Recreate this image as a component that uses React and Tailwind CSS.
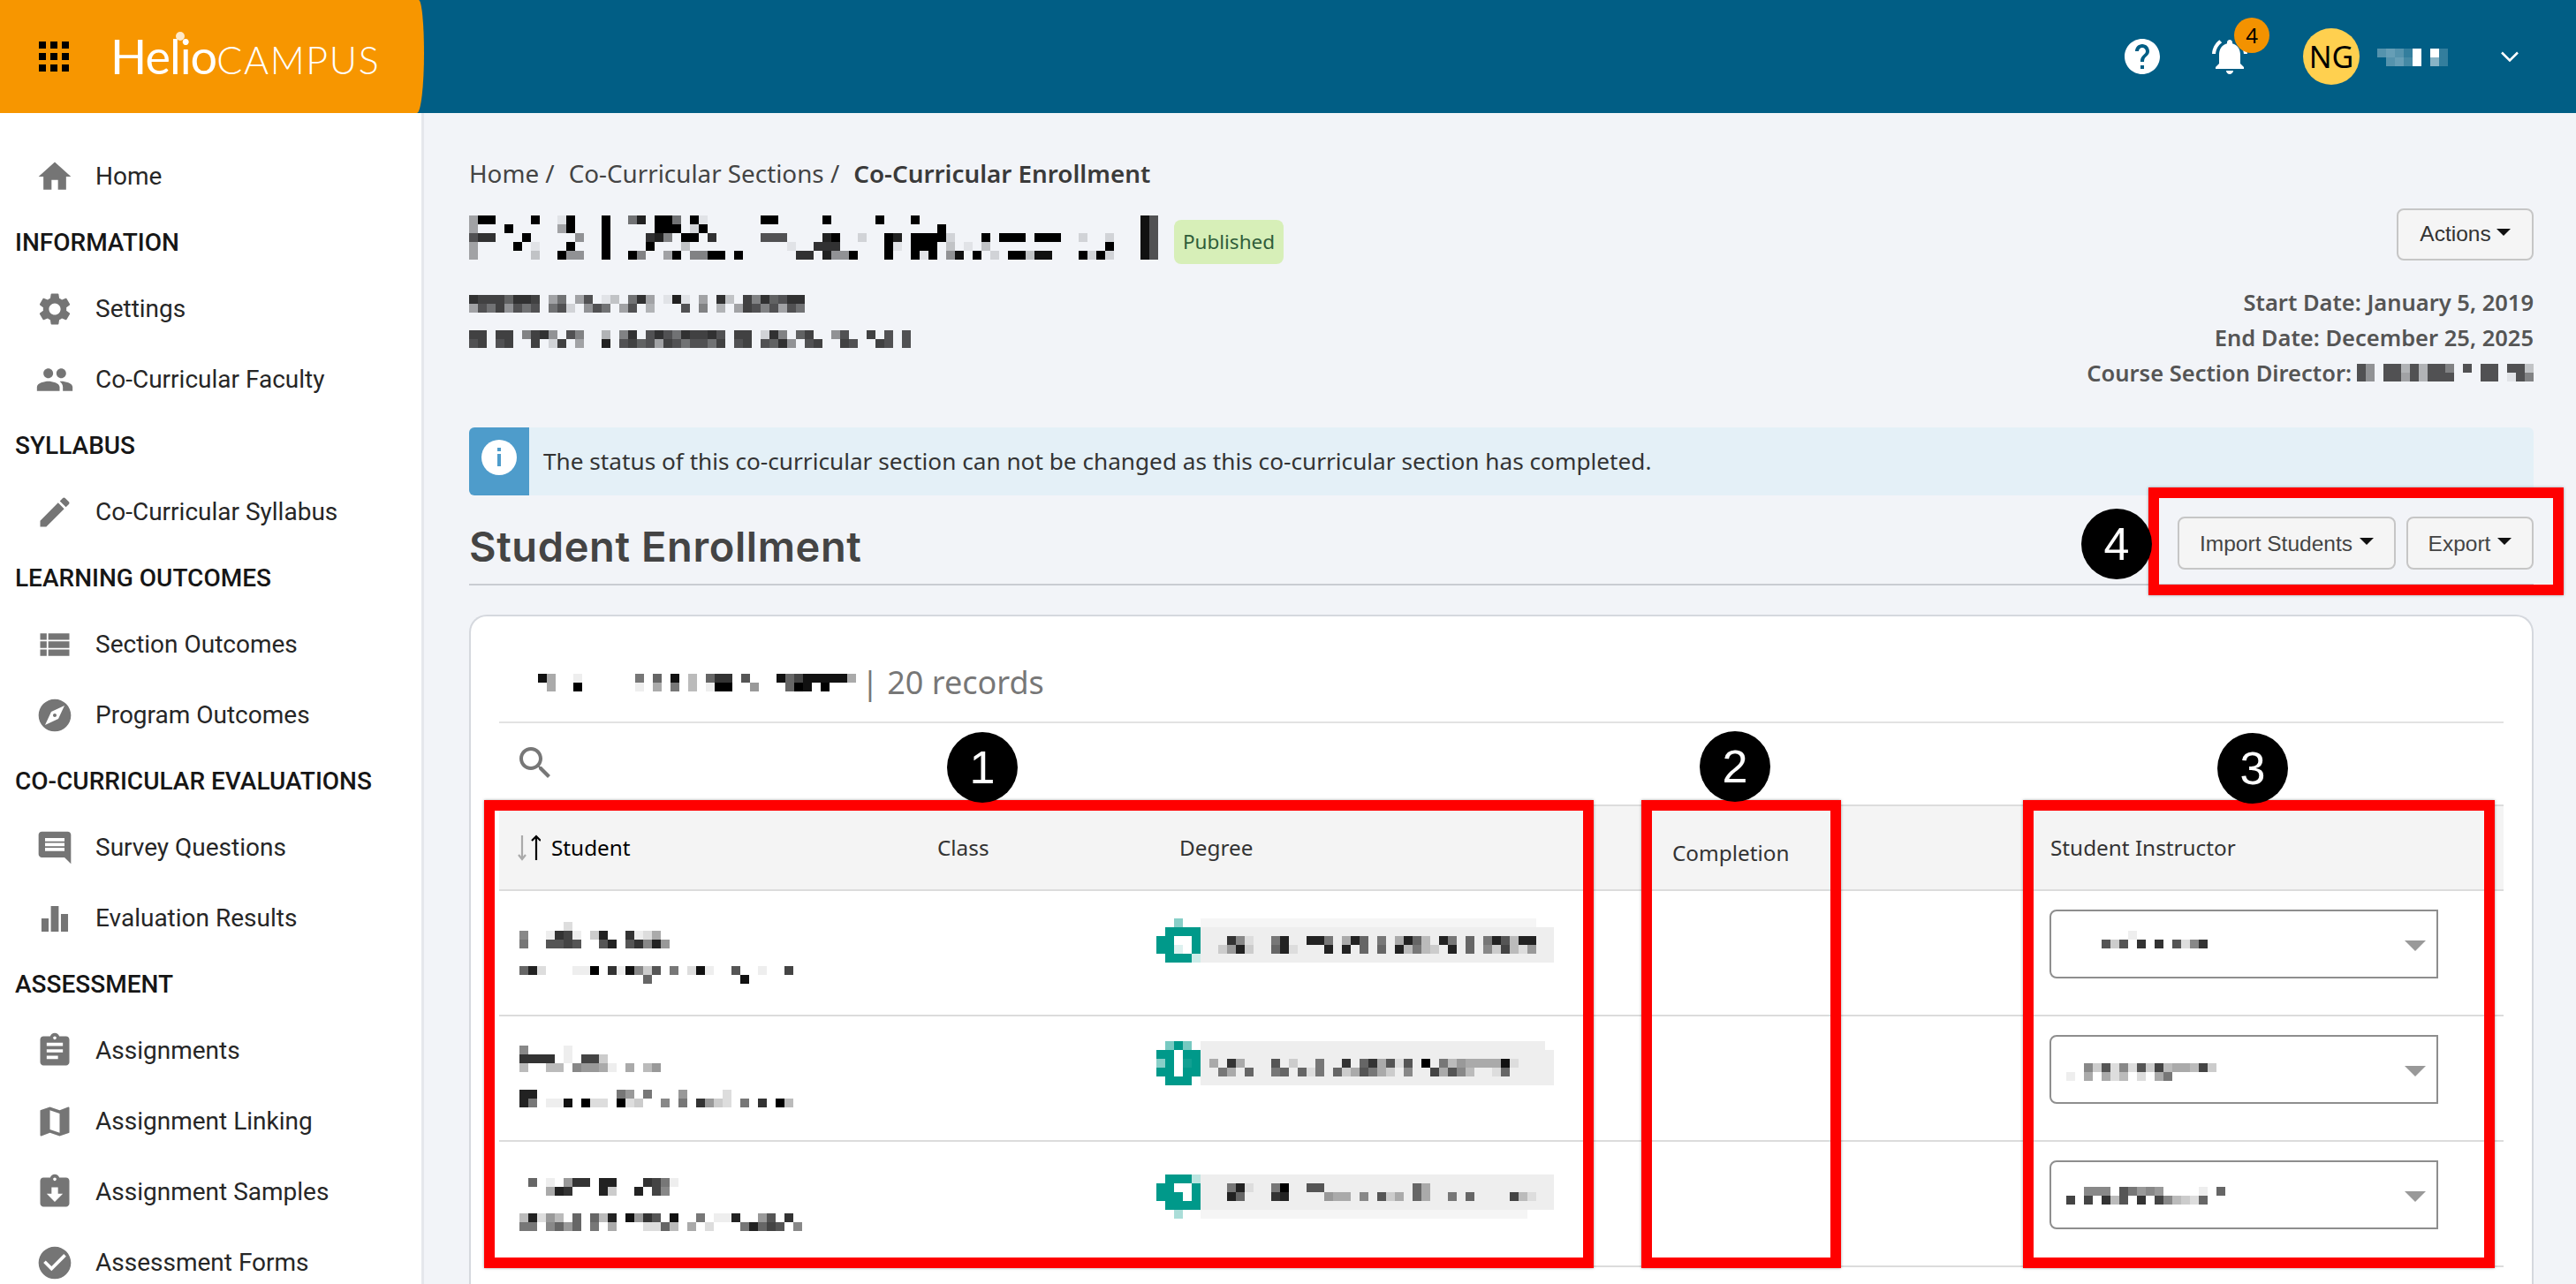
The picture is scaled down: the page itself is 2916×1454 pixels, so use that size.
import React from 'react';

const ICONS = {
  home: 'M10 20v-6h4v6h5v-8h3L12 3 2 12h3v8z',
  settings: 'M19.14,12.94c0.04-0.3,0.06-0.61,0.06-0.94c0-0.32-0.02-0.64-0.07-0.94l2.03-1.58c0.18-0.14,0.23-0.41,0.12-0.61 l-1.92-3.32c-0.12-0.22-0.37-0.29-0.59-0.22l-2.39,0.96c-0.5-0.38-1.03-0.7-1.62-0.94L14.4,2.81c-0.04-0.24-0.24-0.41-0.48-0.41 h-3.84c-0.24,0-0.43,0.17-0.47,0.41L9.25,5.35C8.66,5.59,8.12,5.92,7.63,6.29L5.24,5.33c-0.22-0.08-0.47,0-0.59,0.22L2.74,8.87 C2.62,9.08,2.66,9.34,2.86,9.48l2.03,1.58C4.84,11.36,4.8,11.69,4.8,12s0.02,0.64,0.07,0.94l-2.03,1.58 c-0.18,0.14-0.23,0.41-0.12,0.61l1.92,3.32c0.12,0.22,0.37,0.29,0.59,0.22l2.39-0.96c0.5,0.38,1.03,0.7,1.62,0.94l0.36,2.54 c0.05,0.24,0.24,0.41,0.48,0.41h3.84c0.24,0,0.44-0.17,0.47-0.41l0.36-2.54c0.59-0.24,1.13-0.56,1.62-0.94l2.39,0.96 c0.22,0.08,0.47,0,0.59-0.22l1.92-3.32c0.12-0.22,0.07-0.47-0.12-0.61L19.14,12.94z M12,15.6c-1.98,0-3.6-1.62-3.6-3.6 s1.62-3.6,3.6-3.6s3.6,1.62,3.6,3.6S13.98,15.6,12,15.6z',
  people: 'M16 11c1.66 0 2.99-1.34 2.99-3S17.66 5 16 5c-1.66 0-3 1.34-3 3s1.34 3 3 3zm-8 0c1.66 0 2.99-1.34 2.99-3S9.66 5 8 5C6.34 5 5 6.34 5 8s1.34 3 3 3zm0 2c-2.33 0-7 1.17-7 3.5V19h14v-2.5c0-2.33-4.67-3.5-7-3.5zm8 0c-.29 0-.62.02-.97.05 1.16.84 1.97 1.97 1.97 3.45V19h6v-2.5c0-2.33-4.67-3.5-7-3.5z',
  edit: 'M3 17.25V21h3.75L17.81 9.94l-3.75-3.75L3 17.25zM20.71 7.04c.39-.39.39-1.02 0-1.41l-2.34-2.34c-.39-.39-1.02-.39-1.41 0l-1.83 1.83 3.75 3.75 1.83-1.83z',
  list: 'M3 14h4v-4H3v4zm0 5h4v-4H3v4zM3 9h4V5H3v4zm5 5h13v-4H8v4zm0 5h13v-4H8v4zM8 5v4h13V5H8z',
  explore: 'M12 10.9c-.61 0-1.1.49-1.1 1.1s.49 1.1 1.1 1.1c.61 0 1.1-.49 1.1-1.1s-.49-1.1-1.1-1.1zM12 2C6.48 2 2 6.48 2 12s4.48 10 10 10 10-4.48 10-10S17.52 2 12 2zm2.19 12.19L6 18l3.81-8.19L18 6l-3.81 8.19z',
  comment: 'M21.99 4c0-1.1-.89-2-1.99-2H4c-1.1 0-2 .9-2 2v12c0 1.1.9 2 2 2h14l4 4-.01-18zM18 14H6v-2h12v2zm0-3H6V9h12v2zm0-3H6V6h12v2z',
  chart: 'M3.8 12h4.4v8.2H3.8zM9.6 4.4h4.8v15.8H9.6zM15.8 9.3h4.4v10.9h-4.4z',
  assignment: 'M19 3h-4.18C14.4 1.84 13.3 1 12 1c-1.3 0-2.4.84-2.82 2H5c-1.1 0-2 .9-2 2v14c0 1.1.9 2 2 2h14c1.1 0 2-.9 2-2V5c0-1.1-.9-2-2-2zm-7 0c.55 0 1 .45 1 1s-.45 1-1 1-1-.45-1-1 .45-1 1-1zm2 14H7v-2h7v2zm3-4H7v-2h10v2zm0-4H7V7h10v2z',
  map: 'M20.5 3l-.16.03L15 5.1 9 3 3.36 4.9c-.21.07-.36.25-.36.48V20.5c0 .28.22.5.5.5l.16-.03L9 18.9l6 2.1 5.64-1.9c.21-.07.36-.25.36-.48V3.5c0-.28-.22-.5-.5-.5zM15 19l-6-2.11V5l6 2.11V19z',
  samples: 'M19 3h-4.18C14.4 1.84 13.3 1 12 1c-1.3 0-2.4.84-2.82 2H5c-1.1 0-2 .9-2 2v14c0 1.1.9 2 2 2h14c1.1 0 2-.9 2-2V5c0-1.1-.9-2-2-2zm-7 0c.55 0 1 .45 1 1s-.45 1-1 1-1-.45-1-1 .45-1 1-1zm0 15l-5-5h3V9h4v4h3l-5 5z',
  check: 'M12 2C6.48 2 2 6.48 2 12s4.48 10 10 10 10-4.48 10-10S17.52 2 12 2zm-2 15l-5-5 1.41-1.41L10 14.17l7.59-7.59L19 8l-9 9z',
  search: 'M15.5 14h-.79l-.28-.27C15.41 12.59 16 11.11 16 9.5 16 5.91 13.09 3 9.5 3S3 5.91 3 9.5 5.91 16 9.5 16c1.61 0 3.09-.59 4.23-1.57l.27.28v.79l5 4.99L20.49 19l-4.99-5zm-6 0C7.01 14 5 11.99 5 9.5S7.01 5 9.5 5 14 7.01 14 9.5 11.99 14 9.5 14z',
  help: 'M12 2C6.48 2 2 6.48 2 12s4.48 10 10 10 10-4.48 10-10S17.52 2 12 2zm1 17h-2v-2h2v2zm2.07-7.75l-.9.92C13.45 12.9 13 13.5 13 15h-2v-.5c0-1.1.45-2.1 1.17-2.83l1.24-1.26c.37-.36.59-.86.59-1.41 0-1.1-.9-2-2-2s-2 .9-2 2H8c0-2.21 1.79-4 4-4s4 1.79 4 4c0 .88-.36 1.68-.93 2.25z',
  bell: 'M7.58 4.08L6.15 2.65C3.75 4.48 2.17 7.3 2.03 10.5h2c.15-2.65 1.51-4.97 3.55-6.42zm12.39 6.42h2c-.15-3.2-1.73-6.02-4.12-7.85l-1.42 1.43c2.02 1.45 3.39 3.77 3.54 6.42zM18 11c0-3.07-1.64-5.64-4.5-6.32V4c0-.83-.67-1.5-1.5-1.5s-1.5.67-1.5 1.5v.68C7.63 5.36 6 7.92 6 11v5l-2 2v1h16v-1l-2-2v-5zm-6 11c.14 0 .27-.01.4-.04.65-.14 1.18-.58 1.44-1.18.1-.24.15-.5.15-.78h-4c.01 1.1.9 2 2.01 2z',
};

function Icon({ name, className }) {
  return (
    <svg viewBox="0 0 24 24" className={className} fill="currentColor">
      <path d={ICONS[name]} />
    </svg>
  );
}

// Redacted text in the screenshot: each char is one 10px cell, hex = darkness
function Mosaic({ rows, color = '#000', className = '' }) {
  const cols = Math.max(...rows.map((r) => r.length));
  return (
    <svg
      width={cols * 10}
      height={rows.length * 10}
      shapeRendering="crispEdges"
      className={`shrink-0 block ${className}`}
    >
      {rows.map((row, y) =>
        row.split('').map((c, x) => {
          if (c === '.') return null;
          const alpha = c === ',' ? 0.04 : parseInt(c, 16) / 15;
          return <rect key={x} x={x * 10} y={y * 10} width="10" height="10" fill={color} fillOpacity={alpha} />;
        })
      )}
    </svg>
  );
}

const NAV = [
  { label: 'Home', icon: 'home' },
  { heading: 'INFORMATION' },
  { label: 'Settings', icon: 'settings' },
  { label: 'Co-Curricular Faculty', icon: 'people' },
  { heading: 'SYLLABUS' },
  { label: 'Co-Curricular Syllabus', icon: 'edit' },
  { heading: 'LEARNING OUTCOMES' },
  { label: 'Section Outcomes', icon: 'list' },
  { label: 'Program Outcomes', icon: 'explore' },
  { heading: 'CO-CURRICULAR EVALUATIONS' },
  { label: 'Survey Questions', icon: 'comment' },
  { label: 'Evaluation Results', icon: 'chart' },
  { heading: 'ASSESSMENT' },
  { label: 'Assignments', icon: 'assignment' },
  { label: 'Assignment Linking', icon: 'map' },
  { label: 'Assignment Samples', icon: 'samples' },
  { label: 'Assessment Forms', icon: 'check' },
];

const STUDENTS = [
  {
    rowPad: 'pt-[35px]',
    degreePad: 'pt-[31px]',
    selectPad: 'mt-[22px]',
    name: ['.....2..........', '7..1cb1.3d..c125', '8..aaba..ad.ac7d6'],
    sub: ['9d2...11f.c1e73a.8.2e1..a..1..b', '..............9..........e'],
    icon: ['..7..', '.ffff', 'ff..f', 'ff2.f', '.fff3'],
    chip: [
      ',,,,,,,,,,,,,,,,,,,,,,,,,,,,,,,,,,,,,,',
      '1111111111111111111111111111111111111111',
      '111c72118d11dd815d91815d941d81918da4dd11',
      '1136d3119d2111d1d19191d48431d19173b42611',
      '1111111111111111111111111111111111111111',
    ],
    select: ['.......1', '....a3a.c.c.a27c'],
  },
  {
    rowPad: 'pt-[33px]',
    degreePad: 'pt-[28px]',
    selectPad: 'mt-[30px]',
    name: ['7....1', 'cccc.1.bb3', '4..44.76651.5.46'],
    sub: ['dd.........86.8...6....2', 'd8.11e.f22.f23..7.8.c632.8.c.f4'],
    icon: ['.8f8.', 'ff.ff', '7f.ef', 'ff.ff', '.fff.'],
    chip: [
      '111111111111111111111111111111111111111',
      '1111111111111111111111111111111111111111',
      '151c5111a1311811c19c5a2a1f18465555e21111',
      '118519118919281935a8531711b5a74112911111',
      '1111111111111111111111111111111111111111',
    ],
    select: ['..73a272a3b4554b3', '1.5.524.2.58'],
  },
  {
    rowPad: 'pt-[31px]',
    degreePad: 'pt-[37px]',
    selectPad: 'mt-[28px]',
    name: ['', '.9.1.6cc.dd...cb81', '...5dc...d3..d.b7'],
    sub: ['4d264.9.94d.e6ca.e..8.11d..6a.c', '88.7969.8.5...2294.5.2...8d9ba.7'],
    icon: ['.fff4', 'ff..f', 'fff.f', '.ffff', '..5..'],
    chip: [
      '1111111111111111111111111111111111111111',
      '1118d2118f11aa11111111119511111111111111',
      '111d9111cd1111655171a35195118191111b4211',
      '1111111111111111111111111111111111111111',
      ',,,,,,,,,,,,,,,,,,,,,,,,,,,,,,,,,,,,,',
    ],
    select: ['..777.a8676....1.9', 'b.b.c4a.c.b74329'],
  },
];

const TITLE = [
  '5ff....f..1f...f..8d.ff8.f1......ff.....f.....f...f.........................ea',
  '5...f.....5f...f.....fff.2f..........................f......................ea',
  'acc...f.....6..f....cd7.ff.c.....aaa....df..2..fd.ffff2...f.fff.fff..2..2...ea',
  '5....f.1...f...f....f...3...........1..ccc.....f1.fff.3.1.3.............f...ea',
  '5......3..f66..f..f7..5f.77ff.f......cc.d66f...f..f1f.6e.f.2.ff3ee...f2f2...ea',
];

const SUB_1 = [
  'cbbb9ccb.58.5a.13.8c5.1d1.5.c3.b7c9acc',
  '5a8b6a8a.8a2.6a8.5a.4...a.7.4.5ba7a5a8',
];
const SUB_2 = [
  'bb.bb.7bc6.a7..4.7c.aca8cbbca.bb.2c7.9b..6a..b.a.a',
  'ab.ab..b.2b.5..d.ab9a5ba8aa8b.ab.a9c6.ab..ba..ba.a',
];

function Caret({ className = '' }) {
  return <span className={`inline-block w-0 h-0 border-x-[8px] border-x-transparent border-t-[8px] border-t-[#111] ${className}`} />;
}

function Marker({ n, className }) {
  return (
    <div className={`absolute w-[80px] h-[80px] rounded-full bg-black text-white flex items-center justify-center text-[52px] font-['Liberation_Sans',sans-serif] ${className}`}>
      {n}
    </div>
  );
}

function TopBar() {
  return (
    <header className="flex items-center h-[128px] bg-[#015e85] text-white">
      <div className="flex items-center w-[480px] h-full bg-[#f79600] rounded-tr-[6px_60px] rounded-br-[8px_68px] pl-[44px] overflow-hidden">
        <div className="grid grid-cols-3 gap-[5px] w-[34px]">
          {Array(9)
            .fill(null)
            .map((_, i) => (
              <span key={i} className="w-[8px] h-[8px] bg-black" />
            ))}
        </div>
        <div className="relative flex items-baseline ml-[47px] font-['Lato',sans-serif] text-white">
          <span className="text-[54px] leading-none tracking-[-1px]">Helio</span>
          <span className="text-[43px] leading-none font-light tracking-[1.6px]">CAMPUS</span>
          <span className="absolute left-[74px] top-[-1px] w-[10px] h-[10px] rounded-full bg-[#ffe9c9]" />
        </div>
      </div>
      <div className="ml-auto flex items-center pr-[65px]">
        <Icon name="help" className="w-[48px] h-[48px] text-white" />
        <div className="relative ml-[51px]">
          <Icon name="bell" className="w-[48px] h-[48px] text-white" />
          <span className="absolute left-[29px] top-[-20px] w-[40px] h-[40px] rounded-full bg-[#f39200] text-black flex items-center justify-center text-[24px] font-['Noto_Sans',sans-serif]">
            4
          </span>
        </div>
        <div className="ml-[59px] w-[64px] h-[64px] rounded-full bg-[#ffd04f] text-black flex items-center justify-center text-[34px] font-['Noto_Sans',sans-serif]">
          NG
        </div>
        <Mosaic color="#fff" className="ml-[20px] mt-[2px]" rows={['5653f.f3', '.564f.83']} />
        <svg viewBox="0 0 20 12" className="ml-[60px] w-[20px] h-[12px]" fill="none" stroke="#fff" strokeWidth="2.5">
          <path d="M1 1.5l9 9 9-9" />
        </svg>
      </div>
    </header>
  );
}

function Sidebar() {
  return (
    <aside className="w-[480px] shrink-0 bg-white border-r-[3px] border-[#e5e7ec] pt-[32px] font-['Roboto',sans-serif]">
      {NAV.map((item, i) =>
        item.heading ? (
          <div key={i} className="h-[70px] flex items-center pl-[17px] text-[28px] font-medium text-[#161616]">
            {item.heading}
          </div>
        ) : (
          <div key={i} className="h-[80px] flex items-center pl-[40px] text-[28px] text-[#262626]">
            <Icon name={item.icon} className="w-[44px] h-[44px] text-[#757575] shrink-0" />
            <span className="ml-[24px]">{item.label}</span>
          </div>
        )
      )}
    </aside>
  );
}

function PageHead() {
  return (
    <div className="flex justify-between">
      <div>
        <div className="h-[40px] flex items-center text-[27.8px] text-[#444]">
          <span>Home /</span>
          <span className="ml-[16px]">Co-Curricular Sections /</span>
          <span className="ml-[16px] font-semibold text-[#3a3a3a]">Co-Curricular Enrollment</span>
        </div>
        <div className="flex mt-[27px]">
          <Mosaic rows={TITLE} />
          <span className="ml-[18px] mt-[5px] h-[50px] w-[124px] flex items-center justify-center rounded-[8px] bg-[#d7efb8] text-[#2f5d3a] text-[22.5px]">
            Published
          </span>
        </div>
        <Mosaic rows={SUB_1} className="mt-[35px]" />
        <Mosaic rows={SUB_2} className="mt-[20px]" />
      </div>
      <div className="flex flex-col items-end">
        <button className="mt-[59px] h-[59px] w-[155px] flex items-center justify-center rounded-[8px] border-2 border-[#c6c6c6] bg-[#f5f5f5] text-[24.5px] text-[#333] font-['Liberation_Sans',sans-serif]">
          Actions
          <Caret className="ml-[6px] mb-[6px]" />
        </button>
        <div className="mt-[27px] mb-[1px] text-[25.5px] leading-[40px] font-semibold text-[#555] text-right">
          <div>Start Date: January 5, 2019</div>
          <div>End Date: December 25, 2025</div>
          <div className="flex items-center">
            Course Section Director:
            <Mosaic className="ml-[6px]" rows={['a6.aa4a4aa7.a.aa.aa3', 'a6.aa5a4aaa...aa.1a7']} />
          </div>
        </div>
      </div>
    </div>
  );
}

function Enrollment() {
  return (
    <div className="mt-[33px] bg-white rounded-t-[20px] border-2 border-b-0 border-[#d5d8de] px-[32px] h-[800px]">
      <div className="flex items-center h-[60px] mt-[45px] pl-[44px]">
        <Mosaic rows={['e5..1......8.9.e.4.9cc.a...e9beeeee5', '.5..f......1.5.8.4.1ff..6...9fe.f...']} />
        <span className="ml-[6px] text-[36px] text-[#777]">| 20 records</span>
      </div>
      <div className="h-[94px] mt-[14px] border-t-2 border-[#e2e2e2] flex items-center pl-[17px]">
        <Icon name="search" className="w-[48px] h-[48px] text-[#777] mb-[2px]" />
      </div>
      <div className="grid grid-cols-[480px_265px_567px_428px_1fr] h-[98px] bg-[#f4f4f4] border-y-2 border-[#dcdcdc] items-center text-[24.3px] text-[#333]">
        <div className="flex items-center pl-[21px]">
          <svg viewBox="0 0 26 30" className="w-[26px] h-[30px]" fill="none" strokeWidth="2.2">
            <path d="M5 1v27M1 23l4 5 4-5" stroke="#aaa" />
            <path d="M21 29V2M16 7l5-5 5 5" stroke="#000" />
          </svg>
          <span className="ml-[12px] text-black">Student</span>
        </div>
        <div className="pl-[16px]">Class</div>
        <div className="pl-[25px]">Degree</div>
        <div className="pl-[16px] mt-[12px]">Completion</div>
        <div className="pl-[16px]">Student Instructor</div>
      </div>
      {STUDENTS.map((s, i) => (
        <div key={i} className="grid grid-cols-[479px_265px_567px_428px_1fr] h-[142px] border-b-2 border-[#dcdcdc]">
          <div className={`pl-[23px] ${s.rowPad}`}>
            <Mosaic rows={s.name} />
            <Mosaic rows={s.sub} className="mt-[20px]" />
          </div>
          <div />
          <div className={`flex items-start ${s.degreePad}`}>
            <Mosaic rows={s.icon} color="#00998a" />
            <Mosaic rows={s.chip} />
          </div>
          <div />
          <div className="pl-[16px] pt-[21px]">
            <div className="flex items-start w-[440px] h-[78px] border-2 border-[#8e8e8e] rounded-l-[8px] pl-[17px]">
              <Mosaic rows={s.select} className={s.selectPad} />
              <span className="ml-auto mr-[12px] mt-[33px] w-0 h-0 border-x-[12px] border-x-transparent border-t-[12px] border-t-[#999]" />
            </div>
          </div>
        </div>
      ))}
    </div>
  );
}

export default function App() {
  return (
    <div className="relative w-[2916px] h-[1454px] overflow-hidden bg-[#f2f4f8] font-['Noto_Sans',sans-serif]">
      <TopBar />
      <div className="flex h-[1326px]">
        <Sidebar />
        <main className="flex-1 pl-[51px] pr-[48px] pt-[49px] min-w-0">
          <PageHead />
          <div className="flex mt-[41px] h-[77px] rounded-[6px] overflow-hidden bg-[#e4f0f7]">
            <div className="w-[68px] bg-[#4e9ccb] flex justify-center pt-[14px]">
              <svg viewBox="0 0 40 40" className="w-[40px] h-[40px]">
                <circle cx="20" cy="20" r="20" fill="#fff" />
                <rect x="18" y="9" width="4" height="4" fill="#4e9ccb" />
                <rect x="18" y="16" width="4" height="14" fill="#4e9ccb" />
              </svg>
            </div>
            <div className="flex items-center pl-[16px] text-[26.2px] text-[#333]">
              The status of this co-curricular section can not be changed as this co-curricular section has completed.
            </div>
          </div>
          <div className="flex justify-between items-start h-[78px] mt-[24px] border-b-2 border-[#c9ccd2]">
            <h2 className="text-[47px] leading-[68px] tracking-[0.6px] font-semibold text-[#444] font-['Inter',sans-serif]">Student Enrollment</h2>
            <div className="flex gap-[12px] font-['Liberation_Sans',sans-serif] text-[24.5px] text-[#444]">
              <button className="h-[60px] w-[247px] pt-[2px] flex items-center justify-center rounded-[8px] border-2 border-[#c6c6c6] bg-[#f5f5f5]">
                Import Students
                <Caret className="ml-[8px] mb-[6px]" />
              </button>
              <button className="h-[60px] w-[144px] pt-[2px] flex items-center justify-center rounded-[8px] border-2 border-[#c6c6c6] bg-[#f5f5f5]">
                Export
                <Caret className="ml-[8px] mb-[6px]" />
              </button>
            </div>
          </div>
          <Enrollment />
        </main>
      </div>

      {/* annotation boxes drawn over the screenshot */}
      <div className="absolute left-[548px] top-[906px] w-[1256px] h-[530px] border-[12px] border-[#f00] shadow-[0_0_3px_rgba(0,0,0,0.35)]" />
      <div className="absolute left-[1858px] top-[906px] w-[226px] h-[530px] border-[12px] border-[#f00] shadow-[0_0_3px_rgba(0,0,0,0.35)]" />
      <div className="absolute left-[2290px] top-[906px] w-[534px] h-[530px] border-[12px] border-[#f00] shadow-[0_0_3px_rgba(0,0,0,0.35)]" />
      <div className="absolute left-[2432px] top-[552px] w-[470px] h-[122px] border-[12px] border-[#f00] shadow-[0_0_3px_rgba(0,0,0,0.35)]" />
      <Marker n="1" className="left-[1072px] top-[829px]" />
      <Marker n="2" className="left-[1924px] top-[828px]" />
      <Marker n="3" className="left-[2510px] top-[830px]" />
      <Marker n="4" className="left-[2356px] top-[576px]" />
    </div>
  );
}
